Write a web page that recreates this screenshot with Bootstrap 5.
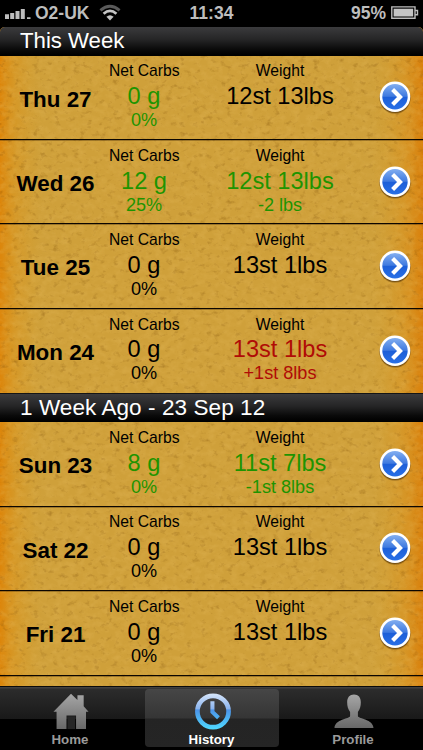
<!DOCTYPE html>
<html lang="en">
<head>
    <meta charset="UTF-8">
    <meta name="viewport" content="width=device-width, initial-scale=1.0">
    <title>History</title>
    <!-- Bootstrap CSS -->
    <link href="https://cdn.jsdelivr.net/npm/bootstrap@5.3.0/dist/css/bootstrap.min.css" rel="stylesheet">
    <style>
        body {
            font-family: "Liberation Sans", Arial, sans-serif;
            background: #000;
            color: #000;
        }
        .phone {
            width: 423px;
            height: 750px;
        }
        .status-bar {
            height: 27px;
            flex: none;
            color: #bdbdbd;
            font-size: 17.5px;
            font-weight: bold;
            line-height: 27px;
        }
        .status-bar > div {
            flex: 1 1 0;
        }
        .section-title {
            height: 29px;
            padding: 0 0 0 20px;
            margin: 0;
            color: #fff;
            font-size: 22.5px;
            font-weight: normal;
            line-height: 28px;
            letter-spacing: .08px;
            background: linear-gradient(#3b3b3d, #252526 45%, #0a0a0a 80%, #000);
            border-bottom: 1px solid #000;
            border-top: 1px solid #151515;
        }
        .section-title.first {
            height: 28.5px;
            border-top: 0;
            font-size: 22.2px;
            letter-spacing: 0;
        }
        .history-list {
            min-height: 0;
            background: #cfa03a;
            isolation: isolate;
            border-radius: 5px 5px 0 0;
        }
        .cork {
            position: absolute;
            inset: 0;
            width: 100%;
            height: 100%;
            z-index: -1;
        }
        .day-row {
            height: 84.45px;
            border-bottom: 1px solid #0c0600;
            box-shadow: 0 1px 0 rgba(40, 20, 0, .3);
        }
        .day-name {
            width: 111px;
            margin-right: -2px;
            padding-top: 2px;
            font-size: 22.4px;
            font-weight: bold;
            line-height: 84px;
            white-space: nowrap;
        }
        .carbs { width: 70px; }
        .weight { width: 202px; }
        .reading {
            padding-top: 5.8px;
            white-space: nowrap;
        }
        .reading-label { font-size: 15.7px; line-height: 20px; }
        .reading-value { font-size: 23.6px; line-height: 26px; margin-top: 1.8px; }
        .reading-diff { font-size: 18.1px; line-height: 22px; }
        .good { color: #1e9400; }
        .bad { color: #b00c06; }
        .go {
            width: 34px;
            height: 34px;
            margin-left: -3.5px;
        }
        .tabs {
            height: 64px;
            flex: none;
            padding: 2px 3px 3px;
            background: linear-gradient(#404040 0, #404040 1px, #2c2c2c 2px, #191919 32px, #000 32px);
            border-top: 1px solid #0a0a0a;
        }
        .tab-item {
            flex: 0 0 134px;
            color: #9a9a9a;
            font-size: 13.3px;
            font-weight: bold;
            line-height: 15px;
            border-radius: 4px;
            text-decoration: none;
        }
        .tab-item svg { margin-top: 3px; margin-left: 2px; }
        .tab-item span { margin-top: 1px; }
        .tab-item.active {
            color: #fff;
            background: linear-gradient(#464646, #353535 29px, #242424 30px, #252525);
        }
    </style>
</head>
<body>
    <!-- shared icon shapes -->
    <svg width="0" height="0" class="position-absolute">
        <defs>
            <linearGradient id="goBlue" x1="0" y1="0" x2="0" y2="1">
                <stop offset="0" stop-color="#82aef0"/>
                <stop offset=".48" stop-color="#3f7ae0"/>
                <stop offset=".52" stop-color="#1d5fd8"/>
                <stop offset="1" stop-color="#286fe6"/>
            </linearGradient>
            <symbol id="goIcon" viewBox="0 0 34 34">
                <circle cx="17" cy="18.2" r="15.6" fill="#3a2000" opacity=".3"/>
                <circle cx="17" cy="17.6" r="15.4" fill="#3a2000" opacity=".4"/>
                <circle cx="17" cy="16.8" r="15.3" fill="#fff"/>
                <circle cx="17" cy="16.8" r="12.7" fill="url(#goBlue)"/>
                <path d="M14.6 9.6L22 17L14.6 24.4" fill="none" stroke="#fff" stroke-width="4.2"/>
            </symbol>
        </defs>
    </svg>

    <div class="phone d-flex flex-column overflow-hidden">
        <div class="status-bar d-flex">
            <div class="d-flex">
                <svg width="35" height="27" viewBox="0 0 35 27" fill="#bdbdbd">
                    <path d="M5 14.3h4V19H5zM10.2 13h4v6h-4zM15.5 11h4v8h-4zM20.8 9h4v10h-4zM27 17.3h3.5V19H27z"/>
                </svg>
                <span>O2-UK</span>
                <svg width="24" height="27" viewBox="-2 0 24 27" class="ms-2" fill="none" stroke-width="2.8">
                    <path d="M1.4 10.4Q11 2.2 20.6 10.4" stroke="#5a5a5a"/>
                    <path d="M4.6 13.8Q11 8 17.4 13.8" stroke="#c4c4c4"/>
                    <path d="M7.4 16.8Q11 13.5 14.6 16.8L11 20.6Z" fill="#c4c4c4"/>
                </svg>
            </div>
            <div class="text-center">11:34</div>
            <div class="d-flex justify-content-end">
                <span>95%</span>
                <svg width="37" height="27" viewBox="0 0 37 27">
                    <path d="M5.8 6.9H29v11.4H5.8zM29.3 10.5h2.2v4.2h-2.2" fill="none" stroke="#bdbdbd" stroke-width="1.4"/>
                    <path d="M7.6 8.7h19.6v7.8H7.6z" fill="#c4c4c4"/>
                </svg>
            </div>
        </div>

        <main class="history-list position-relative flex-grow-1 overflow-hidden">
            <!-- grainy cork background, darker orange towards both sides -->
            <svg class="cork" aria-hidden="true">
                <defs>
                    <filter id="grain" x="0" y="0" width="100%" height="100%" color-interpolation-filters="sRGB">
                        <feTurbulence type="fractalNoise" baseFrequency=".15 .19" numOctaves="3" seed="7"/>
                        <feColorMatrix values="0 0 0 0 .45  0 0 0 0 .27  0 0 0 0 .02  2.6 0 0 0 -1.5"/>
                    </filter>
                    <filter id="shine" x="0" y="0" width="100%" height="100%" color-interpolation-filters="sRGB">
                        <feTurbulence type="fractalNoise" baseFrequency=".13 .17" numOctaves="3" seed="21"/>
                        <feColorMatrix values="0 0 0 0 .9  0 0 0 0 .73  0 0 0 0 .36  0 1.6 0 0 -.6"/>
                    </filter>
                    <linearGradient id="edges">
                        <stop offset="0" stop-color="#dd8408" stop-opacity=".95"/>
                        <stop offset=".035" stop-color="#db9218" stop-opacity=".55"/>
                        <stop offset=".1" stop-color="#d59c28" stop-opacity="0"/>
                        <stop offset=".88" stop-color="#d59c28" stop-opacity="0"/>
                        <stop offset=".955" stop-color="#db8e18" stop-opacity=".55"/>
                        <stop offset="1" stop-color="#da7e08" stop-opacity=".95"/>
                    </linearGradient>
                </defs>
                <rect width="100%" height="100%" fill="url(#edges)"/>
                <rect width="100%" height="100%" filter="url(#shine)" opacity=".38"/>
                <rect width="100%" height="100%" filter="url(#grain)" opacity=".33"/>
            </svg>

            <h2 class="section-title first">This Week</h2>
            <div class="day-row d-flex">
                <div class="day-name text-center">Thu 27</div>
                <div class="reading carbs text-center">
                    <div class="reading-label">Net Carbs</div>
                    <div class="reading-value good">0 g</div>
                    <div class="reading-diff good">0%</div>
                </div>
                <div class="reading weight text-center">
                    <div class="reading-label">Weight</div>
                    <div class="reading-value">12st 13lbs</div>
                </div>
                <svg class="go align-self-center"><use href="#goIcon"/></svg>
            </div>
            <div class="day-row d-flex">
                <div class="day-name text-center">Wed 26</div>
                <div class="reading carbs text-center">
                    <div class="reading-label">Net Carbs</div>
                    <div class="reading-value good">12 g</div>
                    <div class="reading-diff good">25%</div>
                </div>
                <div class="reading weight text-center">
                    <div class="reading-label">Weight</div>
                    <div class="reading-value good">12st 13lbs</div>
                    <div class="reading-diff good">-2 lbs</div>
                </div>
                <svg class="go align-self-center"><use href="#goIcon"/></svg>
            </div>
            <div class="day-row d-flex">
                <div class="day-name text-center">Tue 25</div>
                <div class="reading carbs text-center">
                    <div class="reading-label">Net Carbs</div>
                    <div class="reading-value">0 g</div>
                    <div class="reading-diff">0%</div>
                </div>
                <div class="reading weight text-center">
                    <div class="reading-label">Weight</div>
                    <div class="reading-value">13st 1lbs</div>
                </div>
                <svg class="go align-self-center"><use href="#goIcon"/></svg>
            </div>
            <div class="day-row d-flex border-bottom-0">
                <div class="day-name text-center">Mon 24</div>
                <div class="reading carbs text-center">
                    <div class="reading-label">Net Carbs</div>
                    <div class="reading-value">0 g</div>
                    <div class="reading-diff">0%</div>
                </div>
                <div class="reading weight text-center">
                    <div class="reading-label">Weight</div>
                    <div class="reading-value bad">13st 1lbs</div>
                    <div class="reading-diff bad">+1st 8lbs</div>
                </div>
                <svg class="go align-self-center"><use href="#goIcon"/></svg>
            </div>

            <h2 class="section-title">1 Week Ago - 23 Sep 12</h2>
            <div class="day-row d-flex">
                <div class="day-name text-center">Sun 23</div>
                <div class="reading carbs text-center">
                    <div class="reading-label">Net Carbs</div>
                    <div class="reading-value good">8 g</div>
                    <div class="reading-diff good">0%</div>
                </div>
                <div class="reading weight text-center">
                    <div class="reading-label">Weight</div>
                    <div class="reading-value good">11st 7lbs</div>
                    <div class="reading-diff good">-1st 8lbs</div>
                </div>
                <svg class="go align-self-center"><use href="#goIcon"/></svg>
            </div>
            <div class="day-row d-flex">
                <div class="day-name text-center">Sat 22</div>
                <div class="reading carbs text-center">
                    <div class="reading-label">Net Carbs</div>
                    <div class="reading-value">0 g</div>
                    <div class="reading-diff">0%</div>
                </div>
                <div class="reading weight text-center">
                    <div class="reading-label">Weight</div>
                    <div class="reading-value">13st 1lbs</div>
                </div>
                <svg class="go align-self-center"><use href="#goIcon"/></svg>
            </div>
            <div class="day-row d-flex">
                <div class="day-name text-center">Fri 21</div>
                <div class="reading carbs text-center">
                    <div class="reading-label">Net Carbs</div>
                    <div class="reading-value">0 g</div>
                    <div class="reading-diff">0%</div>
                </div>
                <div class="reading weight text-center">
                    <div class="reading-label">Weight</div>
                    <div class="reading-value">13st 1lbs</div>
                </div>
                <svg class="go align-self-center"><use href="#goIcon"/></svg>
            </div>
        </main>

        <nav class="tabs d-flex justify-content-between">
            <a href="#" class="tab-item d-flex flex-column align-items-center">
                <svg width="40" height="40" viewBox="0 0 40 40">
                    <defs>
                        <linearGradient id="tabGrey" x1="0" y1="0" x2="0" y2="1">
                            <stop offset="0" stop-color="#a6a6a6"/>
                            <stop offset="1" stop-color="#686868"/>
                        </linearGradient>
                    </defs>
                    <path d="M20 1.8L26.6 8.2V3.4H33V14.6L38 20.3H35.4V38H25.2V24H15.4V38H5.2V20.3H2Z" fill="url(#tabGrey)"/>
                    <path d="M16.3 25h8v13h-8z" fill="#262626"/>
                </svg>
                <span>Home</span>
            </a>
            <a href="#" class="tab-item active d-flex flex-column align-items-center">
                <svg width="40" height="40" viewBox="0 0 40 40" fill="none">
                    <defs>
                        <linearGradient id="tabBlue" gradientUnits="userSpaceOnUse" x1="0" y1="2" x2="0" y2="38">
                            <stop offset="0" stop-color="#d4e4fa"/>
                            <stop offset=".42" stop-color="#8bb4ee"/>
                            <stop offset=".46" stop-color="#4c94e8"/>
                            <stop offset="1" stop-color="#4fd8ff"/>
                        </linearGradient>
                    </defs>
                    <circle cx="20" cy="20" r="16" stroke="url(#tabBlue)" stroke-width="4.8"/>
                    <path d="M19.4 9.5V20.5L25.6 26.4" stroke="url(#tabBlue)" stroke-width="4.2"/>
                </svg>
                <span>History</span>
            </a>
            <a href="#" class="tab-item d-flex flex-column align-items-center">
                <svg width="40" height="40" viewBox="0 0 40 40">
                    <path d="M20 2.5C24.5 2.5 27 5.5 27 10.5C27 14.5 26.2 17.5 24 20.5V24.8C24.6 27.4 39.9 27.8 40 37H0C.1 27.8 15.4 27.4 16 24.8V20.5C13.8 17.5 13 14.5 13 10.5C13 5.5 15.5 2.5 20 2.5Z" fill="url(#tabGrey)"/>
                </svg>
                <span>Profile</span>
            </a>
        </nav>
    </div>

    <script src="https://cdn.jsdelivr.net/npm/bootstrap@5.3.0/dist/js/bootstrap.bundle.min.js"></script>
</body>
</html>
